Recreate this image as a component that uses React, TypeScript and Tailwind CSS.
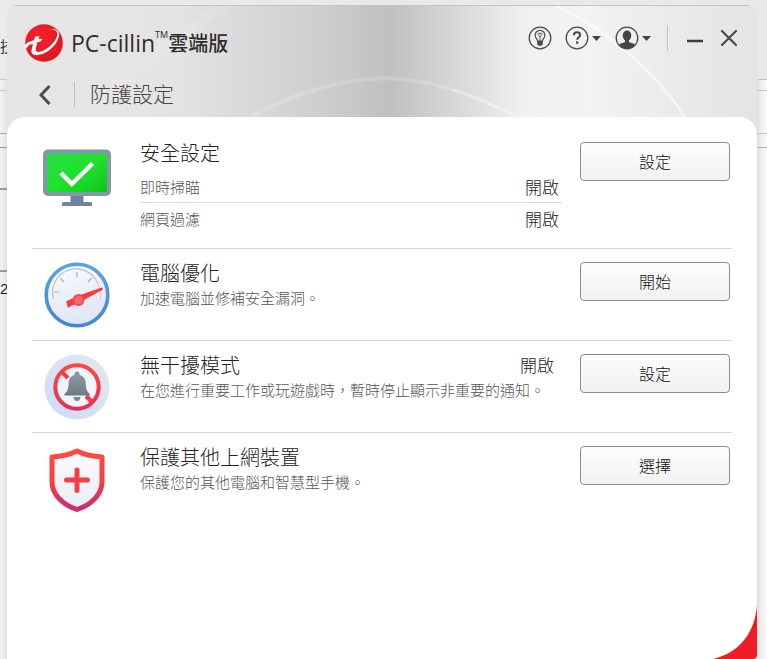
import React from 'react';

const cjk = "font-['Noto_Sans_CJK_TC',sans-serif]";

function TrendLogo() {
  return (
    <svg className="size-[38px] shrink-0" viewBox="0 0 38 38" aria-hidden="true">
      <defs>
        <radialGradient id="ball" cx="0.4" cy="0.35" r="0.7">
          <stop offset="0" stopColor="#f5222c" />
          <stop offset="1" stopColor="#df1620" />
        </radialGradient>
      </defs>
      <circle cx="19" cy="19" r="18.8" fill="url(#ball)" />
      <path
        d="M23 5.500C29 3.800 34.500 6 34 11.500C33 19.500 24.500 28.500 14.500 30.800C9 32 5.800 30 6.500 26L8 20L4.500 20.800L0 25.500L.2 20.500L3 18.300L8.900 16.300L10.200 12.700L14.500 12L13.300 15.300L17.500 14.800L15.500 17.500L12.400 18.300L10.800 24C10.200 27.600 12 28.800 15.800 27.600C23.500 25 31 17.500 32.200 11.500C33 7 29.500 4.800 23 5.500Z"
        fill="#fff"
      />
    </svg>
  );
}

function Caret() {
  return (
    <svg className="h-[5px] w-[9px]" viewBox="0 0 9 5" aria-hidden="true">
      <path d="M0 0h9L4.500 5z" fill="#444" />
    </svg>
  );
}

function BulbIcon() {
  return (
    <svg className="size-6" viewBox="0 0 24 24" fill="none" stroke="#4a4a4a" aria-hidden="true">
      <circle cx="12" cy="12" r="10.800" strokeWidth="1.300" />
      <path d="M9.600 15.200c0-2.200-2.500-3.200-2.500-6a4.900 4.900 0 0 1 9.800 0c0 2.800-2.500 3.800-2.500 6z" strokeWidth="1.200" />
      <path d="M12 15v-4l-1.700-2.200a1 1 0 1 1 1.700-.5 1 1 0 1 1 1.700.5L12 11" strokeWidth=".8" />
      <path d="M9.300 15h5.400v3.300l-1.200 1.500h-3l-1.200-1.500z" fill="#4a4a4a" stroke="none" />
    </svg>
  );
}

function HelpIcon() {
  return (
    <svg className="size-6" viewBox="0 0 24 24" fill="none" stroke="#4a4a4a" aria-hidden="true">
      <circle cx="12" cy="12" r="10.800" strokeWidth="1.300" />
      <path d="M8.900 9.200c0-2 1.300-3 3.100-3s3.100 1 3.100 2.700c0 2.300-2.900 2.300-2.900 4.900" strokeWidth="2.100" />
      <rect x="11" y="15.400" width="2.300" height="2.400" fill="#4a4a4a" stroke="none" />
    </svg>
  );
}

function UserIcon() {
  return (
    <svg className="size-6" viewBox="0 0 24 24" aria-hidden="true">
      <defs>
        <clipPath id="user-clip">
          <circle cx="12" cy="12" r="10.800" />
        </clipPath>
      </defs>
      <g clipPath="url(#user-clip)" fill="#444">
        <ellipse cx="12" cy="9.600" rx="4.300" ry="5" />
        <path d="M10 13h4v3l5.500 2 2 5h-19l2-5 5.500-2z" />
      </g>
      <circle cx="12" cy="12" r="10.800" fill="none" stroke="#4a4a4a" strokeWidth="1.300" />
    </svg>
  );
}

function MonitorIcon() {
  return (
    <svg className="h-[66px] w-[68px]" viewBox="0 0 68 66" aria-hidden="true">
      <defs>
        <linearGradient id="screen" x1="0" y1="0" x2="1" y2="1">
          <stop offset="0" stopColor="#26e04a" />
          <stop offset=".5" stopColor="#1fe22c" />
          <stop offset="1" stopColor="#10c41c" />
        </linearGradient>
      </defs>
      <path d="M27.500 51h13v9h7q1.500 0 1.500 1.500v2.500h-30v-2.500q0-1.500 1.500-1.500h7z" fill="#70849f" />
      <rect x="0" y="7.500" width="68" height="46.500" rx="5" fill="#8495ac" />
      <rect x="4" y="11.500" width="60" height="38.500" fill="url(#screen)" />
      <path d="M19.500 32.500L28.800 42L48 23" fill="none" stroke="#fff" strokeWidth="4.400" strokeLinecap="square" />
    </svg>
  );
}

function GaugeIcon() {
  return (
    <svg className="h-[66px] w-[68px]" viewBox="0 0 68 66" aria-hidden="true">
      <defs>
        <linearGradient id="dial" x1="0" y1="0" x2="0.300" y2="1">
          <stop offset="0" stopColor="#fbfcfe" />
          <stop offset="1" stopColor="#dfe6f6" />
        </linearGradient>
        <linearGradient id="dial-ring" x1="0" y1="0" x2="0" y2="1">
          <stop offset="0" stopColor="#56a4e2" />
          <stop offset="1" stopColor="#4587cf" />
        </linearGradient>
      </defs>
      <circle cx="34" cy="33" r="30.800" fill="url(#dial)" stroke="url(#dial-ring)" strokeWidth="3.600" />
      <path d="M10.500 37A23.500 23.500 0 0 1 55 22" fill="none" stroke="#b9c6c8" strokeWidth="1.200" />
      <path d="M55 22A23.500 23.500 0 0 1 57.500 37" fill="none" stroke="#f0b9c0" />
      <path d="M11 30h5.500M17.500 16.500l3.500 3.500M34 10v5.500M48.500 16L45 20" stroke="#a5b4b6" strokeWidth="1.200" />
      <path d="M23 39.500l10-5 25.500-9q2.200 0 .8 2.500L41 38l-13 6-3 2z" fill="#fa3b3e" />
      <circle cx="35.500" cy="38" r="5.900" fill="#fb454b" />
      <circle cx="35.500" cy="38" r="4" fill="#f2686e" />
    </svg>
  );
}

function MuteIcon() {
  return (
    <svg className="h-[66px] w-[68px]" viewBox="0 0 68 66" aria-hidden="true">
      <defs>
        <linearGradient id="mute-bg" x1="1" y1="0" x2="0.200" y2="1">
          <stop offset="0" stopColor="#e4e8ef" />
          <stop offset="1" stopColor="#cddcf6" />
        </linearGradient>
        <linearGradient id="mute-ring" x1="0" y1="0" x2="0" y2="1">
          <stop offset="0" stopColor="#ff4640" />
          <stop offset="1" stopColor="#e72f56" />
        </linearGradient>
        <linearGradient id="bell" x1="0" y1="0" x2="0" y2="1">
          <stop offset="0" stopColor="#929ba5" />
          <stop offset="1" stopColor="#6e7982" />
        </linearGradient>
      </defs>
      <circle cx="34" cy="33" r="32.500" fill="url(#mute-bg)" />
      <circle cx="34" cy="33" r="21.700" fill="#f0f5fd" stroke="url(#mute-ring)" strokeWidth="4" />
      <path d="M18 17l7 7M43 42l7 7" stroke="#f83d42" strokeWidth="4" />
      <path d="M31.500 21v-1.500q0-2 2.500-2t2.500 2V21c5.500 1.300 6 5 6.300 10 .3 5 1.700 7 4 9v1.500H21.500V40c2.300-2 3.700-4 4-9 .3-5 .8-8.700 6-10z" fill="url(#bell)" />
      <path d="M30.500 43h7q-.5 4-3.500 4t-3.500-4z" fill="#7b858e" />
      <path d="M43.500 42.500l6 6" stroke="#ef3a48" strokeWidth="4" />
    </svg>
  );
}

function ShieldIcon() {
  return (
    <svg className="h-[66px] w-[68px]" viewBox="0 0 68 66" aria-hidden="true">
      <defs>
        <linearGradient id="shield-edge" x1="0" y1="0" x2="0" y2="1">
          <stop offset="0" stopColor="#ff4a3d" />
          <stop offset=".6" stopColor="#f23b47" />
          <stop offset="1" stopColor="#c72c76" />
        </linearGradient>
        <linearGradient id="shield-fill" x1="0" y1="0" x2="0" y2="1">
          <stop offset="0" stopColor="#fafbfd" />
          <stop offset="1" stopColor="#e9edf3" />
        </linearGradient>
      </defs>
      <path d="M34 5C41 8.500 49 10.500 59 11V36C59 48 49 58.500 34 63.500C19 58.500 9 48 9 36V11C19 10.500 27 8.500 34 5Z" fill="url(#shield-fill)" stroke="url(#shield-edge)" strokeWidth="5" strokeLinejoin="round" />
      <path d="M34 24v20.500M23.500 34h21" stroke="#f53e47" strokeWidth="5" strokeLinecap="round" />
    </svg>
  );
}

function HeaderSheen() {
  return (
    <svg className="pointer-events-none absolute inset-0 size-full" viewBox="0 0 750 112" preserveAspectRatio="none" fill="none" stroke="#fff" aria-hidden="true">
      <path d="M80 110Q150 40 220 0" strokeWidth="10" opacity=".1" />
      <path d="M243 112Q310 75 378 73Q440 74 510 112" strokeWidth="4" opacity=".16" />
      <path d="M445 84Q480 96 510 112" strokeWidth="2" opacity=".3" />
      <path d="M550 0Q630 40 678 112" strokeWidth="3" opacity=".5" />
    </svg>
  );
}

type RowProps = {
  icon: React.ReactNode;
  title: string;
  action: string;
  status?: string;
  tall?: boolean;
  last?: boolean;
  children: React.ReactNode;
};

function SettingRow({ icon, title, action, status, tall, last, children }: RowProps) {
  return (
    <section
      className={`flex items-start pt-[13px] pr-0.5 pl-[11px] ${tall ? 'min-h-[120px]' : 'min-h-[92px]'} ${last ? '' : 'border-b border-[#d6d6d6]'}`}
    >
      <div className="w-[68px] shrink-0">{icon}</div>
      <div className="ml-[29px] min-w-0 flex-1">
        <div className="flex items-center justify-between pr-2">
          <h2 className="text-[20px] leading-[22px] font-light text-[#222]">{title}</h2>
          {status && <span className="text-[17px] leading-5 font-light text-[#222]">{status}</span>}
        </div>
        <div className="pt-0.5">{children}</div>
      </div>
      <button
        type="button"
        className="ml-[18px] h-[39px] w-[150px] shrink-0 rounded-[4px] border border-[#8c8c8c] bg-linear-to-b from-[#fdfdfd] to-[#f1f1f1] pb-0.5 text-[16px] leading-6 font-light text-[#111]"
      >
        {action}
      </button>
    </section>
  );
}

const note = 'text-[15px] leading-6 font-light text-[#555]';

export default function App() {
  return (
    <div className={`flex min-h-screen bg-linear-to-b from-[#f0f0f0] to-[#ececec] ${cjk}`}>
      <aside className="flex w-[7px] shrink-0 flex-col overflow-hidden bg-linear-to-r from-[#f4f4f4] to-[#e2e2e2]">
        <div className="h-20 border-b border-[#c9c9c9] bg-[#ebebeb] pt-9 text-[15px] leading-5 whitespace-nowrap text-[#333]">技</div>
        <div className="h-[11px] border-b border-[#c9c9c9]" />
        <div className="h-[43px] border-b border-[#aaa]" />
        <div className="h-[14px] border-b border-[#999]" />
        <div className="h-[42px] border-b-2 border-[#999]" />
        <div className="h-[82px] border-b-2 border-[#999]" />
        <div className="pt-[7px] font-['Liberation_Sans',sans-serif] text-[15px] leading-5 text-[#1c1c3c]">2</div>
      </aside>

      <main className="flex min-w-0 flex-1 flex-col bg-[#e9e9e9] pt-[5px]">
        <div className="relative flex flex-1 flex-col overflow-hidden rounded-t-[10px] rounded-br-[4px] bg-[linear-gradient(90deg,#e6e6e6_0%,#e4e4e4_22%,#d8d8d8_33%,#cecece_42%,#c0c0c0_51%,#d0d0d0_57%,#e0e0e0_63%,#f1f1f1_69%,#f3f3f3_78%,#ebebeb_88%,#e4e4e4_100%)]">
          <header className="relative h-[112px] shrink-0 border-t border-[#c4c4c4]">
            <HeaderSheen />
            <div className="relative flex items-start justify-between pr-5 pl-[18px]">
              <div className="flex items-center pt-[18px]">
                <TrendLogo />
                <h1 className="ml-2 flex items-center text-[#2d2d2d]">
                  <span className="font-['Open_Sans',sans-serif] text-[23px] leading-8 font-medium">PC-cillin</span>
                  <span className="self-start font-['Open_Sans',sans-serif] text-[9px] leading-4">TM</span>
                  <span className="text-[20px] leading-8 font-medium">雲端版</span>
                </h1>
              </div>
              <div className="flex items-center pt-[19px]">
                <button type="button" aria-label="提示"><BulbIcon /></button>
                <button type="button" aria-label="說明" className="ml-[13px] flex items-center gap-[3px]"><HelpIcon /><Caret /></button>
                <button type="button" aria-label="帳號" className="ml-[14px] flex items-center gap-[3px]"><UserIcon /><Caret /></button>
                <div className="ml-4 h-[26px] w-px bg-[#c6c6c6]" />
                <button type="button" aria-label="最小化" className="ml-[19px]">
                  <svg className="size-4" viewBox="0 0 16 16" aria-hidden="true"><path d="M0 11h16" stroke="#3c3c3c" strokeWidth="2.500" /></svg>
                </button>
                <button type="button" aria-label="關閉" className="ml-[18px]">
                  <svg className="size-4" viewBox="0 0 16 16" aria-hidden="true"><path d="M1 1l14 14M15 1L1 15" stroke="#4a4a4a" strokeWidth="2.200" strokeLinecap="round" /></svg>
                </button>
              </div>
            </div>
            <nav className="relative mt-[15px] flex h-8 items-center pl-8">
              <button type="button" aria-label="返回" className="mt-1">
                <svg className="h-5 w-3" viewBox="0 0 12 20" aria-hidden="true"><path d="M10.500 1L2 10l8.500 9" fill="none" stroke="#4d4d4d" strokeWidth="3" /></svg>
              </button>
              <div className="mt-1 ml-[23px] h-[26px] w-px bg-[#c2c2c2]" />
              <span className="ml-[15px] text-[21px] leading-8 font-light text-[#444]">防護設定</span>
            </nav>
          </header>

          <div className="flex-1 rounded-t-[18px] bg-white px-[25px] pt-3">
            <SettingRow icon={<MonitorIcon />} title="安全設定" action="設定" tall>
              <dl className="pt-[5px]">
                <div className="flex h-8 items-center justify-between border-b border-[#dcdcdc] pr-[3px]">
                  <dt className={note}>即時掃瞄</dt>
                  <dd className="text-[17px] leading-6 font-light text-[#222]">開啟</dd>
                </div>
                <div className="flex h-8 items-center justify-between pr-[3px]">
                  <dt className={note}>網頁過濾</dt>
                  <dd className="text-[17px] leading-6 font-light text-[#222]">開啟</dd>
                </div>
              </dl>
            </SettingRow>
            <SettingRow icon={<GaugeIcon />} title="電腦優化" action="開始">
              <p className={note}>加速電腦並修補安全漏洞。</p>
            </SettingRow>
            <SettingRow icon={<MuteIcon />} title="無干擾模式" status="開啟" action="設定">
              <p className={note}>在您進行重要工作或玩遊戲時，暫時停止顯示非重要的通知。</p>
            </SettingRow>
            <SettingRow icon={<ShieldIcon />} title="保護其他上網裝置" action="選擇" last>
              <p className={note}>保護您的其他電腦和智慧型手機。</p>
            </SettingRow>
          </div>

          <svg className="absolute right-0 bottom-0 h-[54px] w-[44px]" viewBox="0 0 44 54" aria-hidden="true">
            <path d="M44 0C42 28 26 48 0 54H44Z" fill="#ee1c25" />
          </svg>
        </div>
      </main>

      <aside className="flex w-[10px] shrink-0 flex-col bg-linear-to-r from-[#dedede] via-[#f2f2f2] to-[#f9f9f9]">
        <div className="h-20 border-b border-[#c4c4c4] bg-[#e9e9e9]" />
        <div className="h-[11px] border-b border-[#c4c4c4]" />
        <div className="h-[43px] border-b border-[#c4c4c4]" />
        <div className="h-[14px] border-b border-[#b0b0b0]" />
      </aside>
    </div>
  );
}
